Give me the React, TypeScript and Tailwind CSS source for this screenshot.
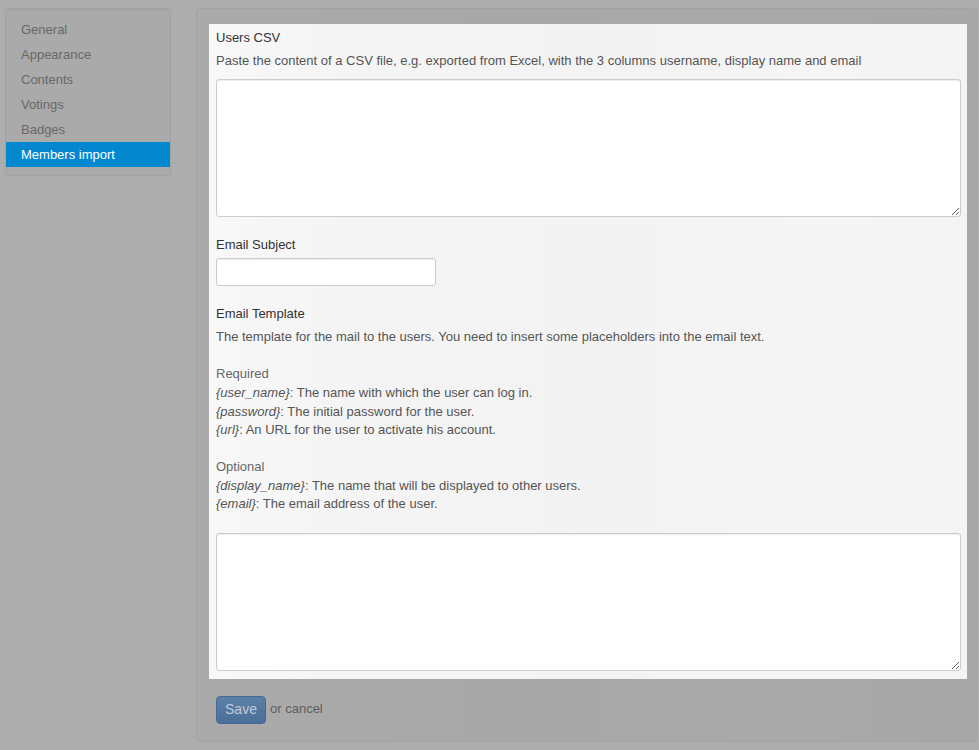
import React from 'react';

const NAV = ['General', 'Appearance', 'Contents', 'Votings', 'Badges', 'Members import'];

export default function App() {
    return (
        <div className="min-h-[750px] bg-[#adadad] flex items-start gap-[25px] pl-[5px] pt-[8px] pr-[2px] text-[13px]" style={{ fontFamily: '"Liberation Sans", Arial, sans-serif' }}>

            {/* Sidebar */}
            <div className="w-[166px] shrink-0 bg-[#aaaaaa] border border-[#a2a2a2] rounded-[4px] py-[8px] shadow-[inset_0_1px_1px_rgba(0,0,0,0.04)]">
                {NAV.map(item => (
                    <div key={item} className={`h-[25px] leading-[25px] pl-[15px] ${item === 'Members import' ? 'bg-[#0388cf] text-white' : 'text-[#686868]'}`}>
                        {item}
                    </div>
                ))}
            </div>

            {/* Settings well */}
            <div className="flex-1 h-[734px] bg-[#aaaaaa] border border-[#a2a2a2] rounded-[4px] pl-[12px] pr-[9px] pt-[15px] bg-[linear-gradient(to_right,#aaaaaa,#a8a8a8_40%,#a9a9a9_80%,#a7a7a7)]">

                {/* Highlighted form */}
                <div className="bg-[linear-gradient(to_right,#f8f8f8,#f4f4f4_20%,#f3f3f3_55%,#f5f5f5_80%,#f4f4f4)] pl-[7px] pr-[6px] pt-[5px] pb-[8px] leading-[18.57px]">
                    <div className="text-[#333]">Users CSV</div>
                    <div className="text-[#555] mt-[4px]">Paste the content of a CSV file, e.g. exported from Excel, with the 3 columns username, display name and email</div>
                    <textarea className="block w-full h-[138px] mt-[9px] bg-white border border-[#cccccc] rounded-[3px] shadow-[inset_0_1px_1px_rgba(0,0,0,0.075)] outline-none" />

                    <div className="text-[#333] mt-[19px]">Email Subject</div>
                    <input type="text" className="block w-[220px] h-[28px] mt-[3px] bg-white border border-[#cccccc] rounded-[3px] shadow-[inset_0_1px_1px_rgba(0,0,0,0.075)] outline-none" />

                    <div className="text-[#333] mt-[19px]">Email Template</div>
                    <div className="text-[#555] mt-[5px]">
                        <p>The template for the mail to the users. You need to insert some placeholders into the email text.</p>
                        <p className="mt-[18.57px]"><span className="text-[#666]">Required</span><br />
                            <i>{'{user_name}'}</i>: The name with which the user can log in.<br />
                            <i>{'{password}'}</i>: The initial password for the user.<br />
                            <i>{'{url}'}</i>: An URL for the user to activate his account.</p>
                        <p className="mt-[18.57px]"><span className="text-[#666]">Optional</span><br />
                            <i>{'{display_name}'}</i>: The name that will be displayed to other users.<br />
                            <i>{'{email}'}</i>: The email address of the user.</p>
                    </div>
                    <textarea className="block w-full h-[138px] mt-[19px] bg-white border border-[#cccccc] rounded-[3px] shadow-[inset_0_1px_1px_rgba(0,0,0,0.075)] outline-none" />
                </div>

                {/* Actions */}
                <div className="flex items-center gap-[4px] mt-[17px] pl-[7px]">
                    <button className="w-[50px] h-[28px] rounded-[4px] border border-[#44688f] bg-[linear-gradient(to_bottom,#5a80a8,#4a7099)] text-[#c3cbd4] text-[14px]">Save</button>
                    <span className="text-[#5e5e5e] -mt-[2px]">or cancel</span>
                </div>
            </div>
        </div>
    );
}
